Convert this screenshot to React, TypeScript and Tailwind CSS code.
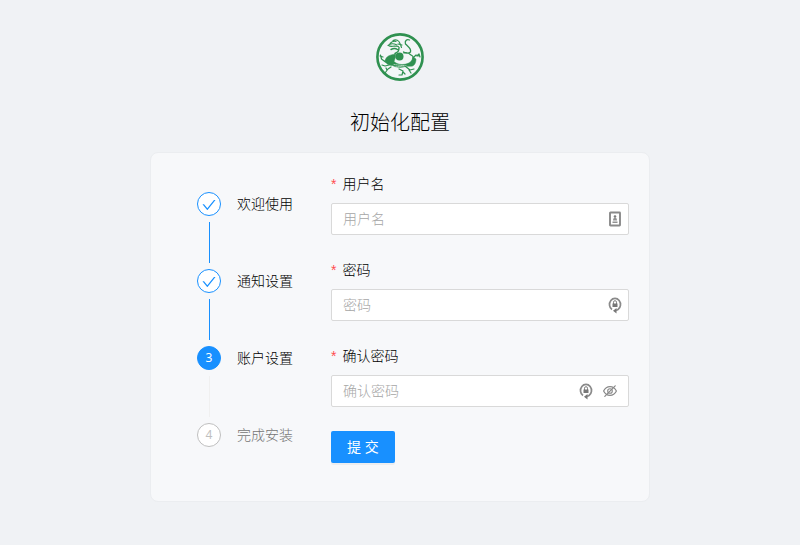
import { useState } from "react";
import type { ReactNode } from "react";
import clsx from "clsx";

const STEPS = ["欢迎使用", "通知设置", "账户设置", "完成安装"];
const CURRENT = 2;

function Logo() {
  return (
    <svg viewBox="0 0 50 50" className="size-[50px]" fill="none" stroke="#2f9150" strokeLinecap="round" strokeLinejoin="round" aria-label="logo">
      <circle cx="25" cy="25" r="22.6" fill="#f3f6f7" strokeWidth="2.6" />
      {/* head and horns */}
      <path d="M13 13.500c2-2 5-2.500 9-.5M18 8.500c3-1.500 6 0 7 3M15 11.500c2-2 4-2.500 6-2M13.500 13.500c2 1.500 4 1 6 .5l4 .5M23 12l4 1M25 11.500l1.500 4" strokeWidth="1.100" />
      <path d="M16 17.500c3-1.500 5-1 6.500 0M24 15.500c0 4-1 4.500-4 6" strokeWidth="1.400" />
      {/* body coil */}
      <path d="M10 29c1-4 3-5.500 8-6.500 1 0 2-.5 2.500-1v4c-1 2-1 3-1.500 4 3 3 8 3.500 12 2.500 4-1 6-3 7-7l3 2c0 3-1 6-3.500 7-3 .5-6-.5-9 1-4 1-8 0-11-1.500-3 0-6-1-7.500-4.500z" fill="#2f9150" strokeWidth="0.500" />
      <path d="M19 32.500l12 1.500M21 35l10-1.500" stroke="#d3e5da" strokeWidth="0.700" strokeDasharray="1.200 1" />
      <circle cx="24.500" cy="24.500" r="4" fill="#2f9150" stroke="none" />
      {/* claws and tail */}
      <path d="M10.500 30l-4-3-1-4M5 24l3 1M14 33l-4 1-3-1M16 35l-3 2-3 4M12 38l-1-2M24 37l4 2-1 4-3 0M28 40l2 2M30 34l5 4 4-1M34 38l2 3M38 26l3-3 3 1M42 24l2-2 1 3" strokeWidth="1.200" />
      <path d="M34.500 8c-3-1-5 1-4 4 3 3 6 4 5 8-2 2-6 1-7 0M29 21c3-1 5 0 7 2 2 1 3 2 2 4" strokeWidth="1.300" />
    </svg>
  );
}

function StepCheck() {
  return (
    <svg viewBox="64 64 896 896" className="mt-px size-[14px]" fill="currentColor" aria-hidden="true">
      <path d="M912 190h-69.900c-9.800 0-19.100 4.500-25.100 12.200L404.700 724.500 207 474a32 32 0 0 0-25.100-12.200H112c-6.700 0-10.400 7.700-6.300 12.900l273.900 347c12.800 16.200 37.400 16.200 50.300 0l488.400-618.900c4.100-5.100.4-12.800-6.300-12.800z" />
    </svg>
  );
}

function IdBadge() {
  return (
    <svg viewBox="0 0 14 16" className="h-4 w-[14px]" fill="none" aria-hidden="true">
      <rect x="2" y="1.500" width="10" height="13" rx="0.500" stroke="#8a8a8a" strokeWidth="1.900" />
      <circle cx="7" cy="5.500" r="1.300" fill="#7c7c7c" />
      <path d="M5 9.500c0-4 4-4 4 0zM4.500 10.500h5v1.500h-5z" fill="#929292" />
    </svg>
  );
}

function LockCycle() {
  return (
    <svg viewBox="0 0 14 18" className="h-[18px] w-[14px]" fill="none" aria-hidden="true">
      <path d="M4 13.500A5.500 6 0 1 1 10 13.500L8 14.500" stroke="#8a8a8a" strokeWidth="1.700" />
      <path d="M8.500 12v5.500L5 14.800z" fill="#777" />
      <path d="M5.500 8V6.200a1.500 1.500 0 0 1 3 0V8" stroke="#808080" strokeWidth="1" />
      <path d="M4.500 7.500h5v3.500h-5z" fill="#777" />
    </svg>
  );
}

function EyeOff() {
  return (
    <svg viewBox="0 0 14 14" className="size-[14px]" fill="none" stroke="#888" strokeLinecap="round" aria-hidden="true">
      <path d="M.6 7C3.500 1.200 10.500 1.200 13.400 7 10.500 12.800 3.500 12.800.6 7z" strokeWidth="1.200" />
      <circle cx="7" cy="7" r="2.300" strokeWidth="1.100" />
      <path d="M1.800 12.400L12.200 1.800" strokeWidth="1.200" />
    </svg>
  );
}

function Steps() {
  return (
    <ol className="w-40 shrink-0 pt-[19px] pl-[26px]">
      {STEPS.map((title, i) => (
        <li key={title} className="flex gap-4" aria-current={i === CURRENT ? "step" : undefined}>
          <div className="flex flex-col items-center">
            <span
              className={clsx(
                "flex size-6 items-center justify-center rounded-full border text-xs font-normal",
                i < CURRENT && "border-[#1890ff] bg-white text-[#1890ff]",
                i === CURRENT && "border-[#1890ff] bg-[#1890ff] text-white",
                i > CURRENT && "border-[#bfbfbf] bg-white text-[#bfbfbf]"
              )}
            >
              {i < CURRENT ? <StepCheck /> : i + 1}
            </span>
            {i < STEPS.length - 1 && (
              <span className={clsx("my-[6px] ml-px h-[41px] w-px", i < CURRENT ? "bg-[#1890ff]" : "bg-[#f0f0f0]")} />
            )}
          </div>
          <span className={clsx("text-sm leading-6", i > CURRENT ? "text-[#757575]" : "text-black")}>{title}</span>
        </li>
      ))}
    </ol>
  );
}

function Field({ id, label, type, children }: { id: string; label: string; type: string; children: ReactNode }) {
  return (
    <div className="mb-6">
      <label htmlFor={id} className="mb-2 flex items-center gap-[6px] text-sm leading-[22px] text-black">
        <span className="font-['Liberation_Sans'] font-normal text-[#ff4d4f]">*</span>
        {label}
      </label>
      <div className="flex h-8 items-center rounded-xs border border-[#d9d9d9] bg-white pr-[6px] pl-[11px]">
        <input id={id} type={type} placeholder={label} className="min-w-0 flex-1 bg-transparent text-sm outline-none placeholder:text-[#a6a6a6]" />
        {children}
      </div>
    </div>
  );
}

export default function App() {
  const [visible, setVisible] = useState(false);

  return (
    <main className="flex min-h-screen flex-col items-center bg-[#f0f2f5] px-4 pt-8 pb-10 font-['Noto_Sans','Noto_Sans_CJK_SC',sans-serif] font-light">
      <Logo />
      <h1 className="mt-[25px] text-xl leading-8 text-black">初始化配置</h1>
      <section className="mt-[13px] flex w-full max-w-[500px] rounded-lg border border-[#ebedf0] bg-[#f7f8fa] px-5 pt-5 pb-[38px]">
        <Steps />
        <form className="min-w-0 flex-1" onSubmit={(e) => e.preventDefault()}>
          <Field id="username" label="用户名" type="text">
            <IdBadge />
          </Field>
          <Field id="password" label="密码" type="password">
            <LockCycle />
          </Field>
          <Field id="confirm" label="确认密码" type={visible ? "text" : "password"}>
            <LockCycle />
            <button type="button" aria-label="显示密码" className="mr-[5px] ml-[10px]" onClick={() => setVisible(!visible)}>
              <EyeOff />
            </button>
          </Field>
          <button type="submit" className="h-8 rounded-xs bg-[#1890ff] px-4 text-sm font-normal text-white shadow-[0_2px_0_rgba(0,0,0,0.045)]">
            提 交
          </button>
        </form>
      </section>
    </main>
  );
}
